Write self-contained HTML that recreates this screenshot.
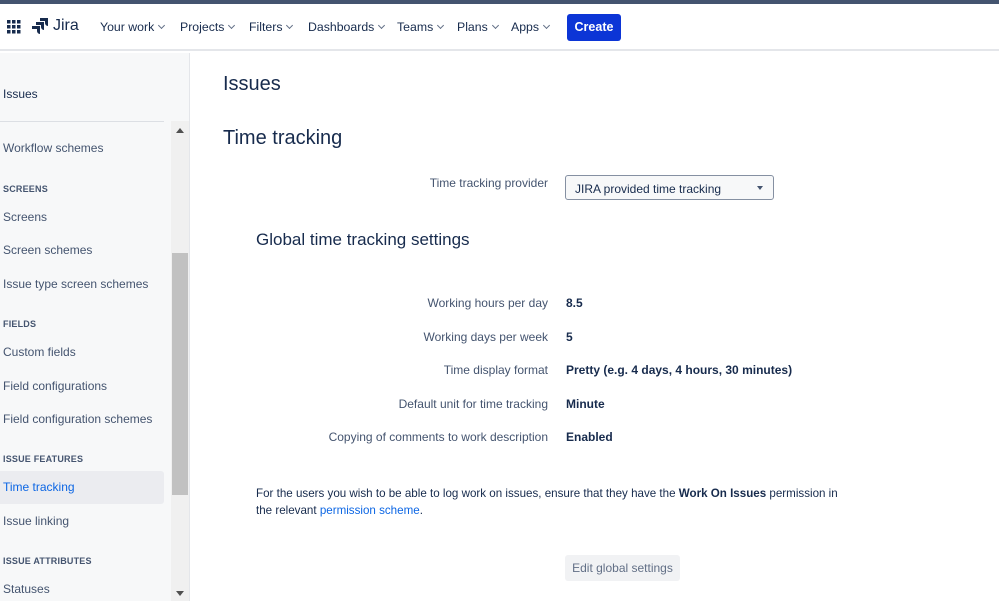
<!DOCTYPE html>
<html><head><meta charset="utf-8"><style>
*{margin:0;padding:0;box-sizing:border-box}
body{width:999px;height:601px;overflow:hidden;background:#fff;font-family:"Liberation Sans",sans-serif;color:#172b4d;position:relative}
.top{position:absolute;left:0;top:0;width:999px;height:4px;background:#44546f}
.nav{position:absolute;left:0;top:4px;width:999px;height:47px;background:#fff;border-bottom:2px solid #e4e6ea}
.nav span.i{position:absolute;top:16px;font-size:12.3px;color:#172b4d}
.nav span.i:after{content:"";display:inline-block;width:4px;height:4px;border-right:1.3px solid #626f86;border-bottom:1.3px solid #626f86;transform:rotate(45deg);margin-left:5px;position:relative;top:-3px}
.create{position:absolute;left:567px;top:10px;width:54px;height:27px;background:#0c35d6;color:#fff;border-radius:3px;font-size:12.5px;font-weight:bold;text-align:center;line-height:27px}
.side{position:absolute;left:0;top:53px;width:190px;height:548px;background:#f7f8f9;border-right:1px solid #e4e6ea}
.s{position:absolute;left:3px;font-size:12px;color:#44546f}
.h{position:absolute;left:3px;font-size:9px;font-weight:bold;color:#44546f;letter-spacing:.2px}
.sb{position:absolute;left:171px;top:121px;width:18px;height:480px;background:#f0f0f0}
.th{position:absolute;left:172px;top:253px;width:16px;height:242px;background:#c1c1c1}
.lbl{position:absolute;right:451px;font-size:12px;color:#44546f;text-align:right}
.val{position:absolute;left:566px;font-size:12px;font-weight:bold;color:#172b4d}
</style></head><body>
<div class="top"></div>
<div class="nav">
<svg style="position:absolute;left:7px;top:16px" width="14" height="14" viewBox="0 0 14 14" fill="#172b4d"><rect x="0" y="0" width="3.5" height="3.5"/><rect x="5" y="0" width="3.5" height="3.5"/><rect x="10" y="0" width="3.5" height="3.5"/><rect x="0" y="5" width="3.5" height="3.5"/><rect x="5" y="5" width="3.5" height="3.5"/><rect x="10" y="5" width="3.5" height="3.5"/><rect x="0" y="10" width="3.5" height="3.5"/><rect x="5" y="10" width="3.5" height="3.5"/><rect x="10" y="10" width="3.5" height="3.5"/></svg>
<svg style="position:absolute;left:32px;top:14px" width="16" height="17" viewBox="0 0 16 17" fill="#172b4d"><path d="M8 0h8v8a3 3 0 0 1-3-3V3H8z"/><path d="M4 4h8v8a3 3 0 0 1-3-3V7H4z"/><path d="M0 8h8v8a3 3 0 0 1-3-3v-2H0z"/></svg>
<span style="position:absolute;left:53px;top:13px;font-size:16px;color:#172b4d">Jira</span>
<span class="i" style="left:100px">Your work</span>
<span class="i" style="left:180px">Projects</span>
<span class="i" style="left:249px">Filters</span>
<span class="i" style="left:308px">Dashboards</span>
<span class="i" style="left:397px">Teams</span>
<span class="i" style="left:457px">Plans</span>
<span class="i" style="left:511px">Apps</span>
<div class="create">Create</div>
</div>
<div class="side">
<div class="s" style="top:34px;color:#172b4d">Issues</div>
<div style="position:absolute;left:0;top:68px;width:164px;height:1px;background:#dcdfe4"></div>
<div class="s" style="top:88px">Workflow schemes</div>
<div class="h" style="top:131px">SCREENS</div>
<div class="s" style="top:157px">Screens</div>
<div class="s" style="top:190px">Screen schemes</div>
<div class="s" style="top:224px">Issue type screen schemes</div>
<div class="h" style="top:266px">FIELDS</div>
<div class="s" style="top:292px">Custom fields</div>
<div class="s" style="top:326px">Field configurations</div>
<div class="s" style="top:359px">Field configuration schemes</div>
<div class="h" style="top:401px">ISSUE FEATURES</div>
<div style="position:absolute;left:0;top:418px;width:164px;height:33px;background:#ebecf0;border-radius:0 3px 3px 0"></div>
<div class="s" style="top:427px;color:#0c66e4">Time tracking</div>
<div class="s" style="top:461px">Issue linking</div>
<div class="h" style="top:503px">ISSUE ATTRIBUTES</div>
<div class="s" style="top:529px">Statuses</div>
</div>
<div class="sb"></div><div class="th"></div>
<div style="position:absolute;left:176px;top:128px;width:0;height:0;border-left:4px solid transparent;border-right:4px solid transparent;border-bottom:5px solid #505050"></div>
<div style="position:absolute;left:176px;top:591px;width:0;height:0;border-left:4px solid transparent;border-right:4px solid transparent;border-top:5px solid #505050"></div>

<div style="position:absolute;left:223px;top:73px;font-size:20px;color:#172b4d">Issues</div>
<div style="position:absolute;left:223px;top:127px;font-size:20px;color:#172b4d">Time tracking</div>
<div class="lbl" style="top:176px">Time tracking provider</div>
<div style="position:absolute;left:565px;top:175px;width:209px;height:25px;border:1px solid #8590a2;border-radius:3px;background:#f7f8f9;font-size:12px;padding:6px 9px;color:#172b4d">JIRA provided time tracking</div>
<div style="position:absolute;left:757px;top:186px;border-left:3px solid transparent;border-right:3px solid transparent;border-top:4px solid #44546f"></div>
<div style="position:absolute;left:256px;top:230px;font-size:17px;color:#172b4d">Global time tracking settings</div>
<div class="lbl" style="top:296px">Working hours per day</div><div class="val" style="top:296px">8.5</div>
<div class="lbl" style="top:330px">Working days per week</div><div class="val" style="top:330px">5</div>
<div class="lbl" style="top:363px">Time display format</div><div class="val" style="top:363px">Pretty (e.g. 4 days, 4 hours, 30 minutes)</div>
<div class="lbl" style="top:397px">Default unit for time tracking</div><div class="val" style="top:397px">Minute</div>
<div class="lbl" style="top:430px">Copying of comments to work description</div><div class="val" style="top:430px">Enabled</div>
<div style="position:absolute;left:256px;top:486px;width:600px;font-size:11.6px;line-height:16.5px;color:#172b4d">For the users you wish to be able to log work on issues, ensure that they have the <b>Work On Issues</b> permission in the relevant <span style="color:#0c66e4">permission scheme</span>.</div>
<div style="position:absolute;left:565px;top:555px;width:115px;height:26px;background:#f1f2f4;border-radius:3px;font-size:12px;color:#626f86;text-align:center;line-height:26px">Edit global settings</div>
</body></html>
